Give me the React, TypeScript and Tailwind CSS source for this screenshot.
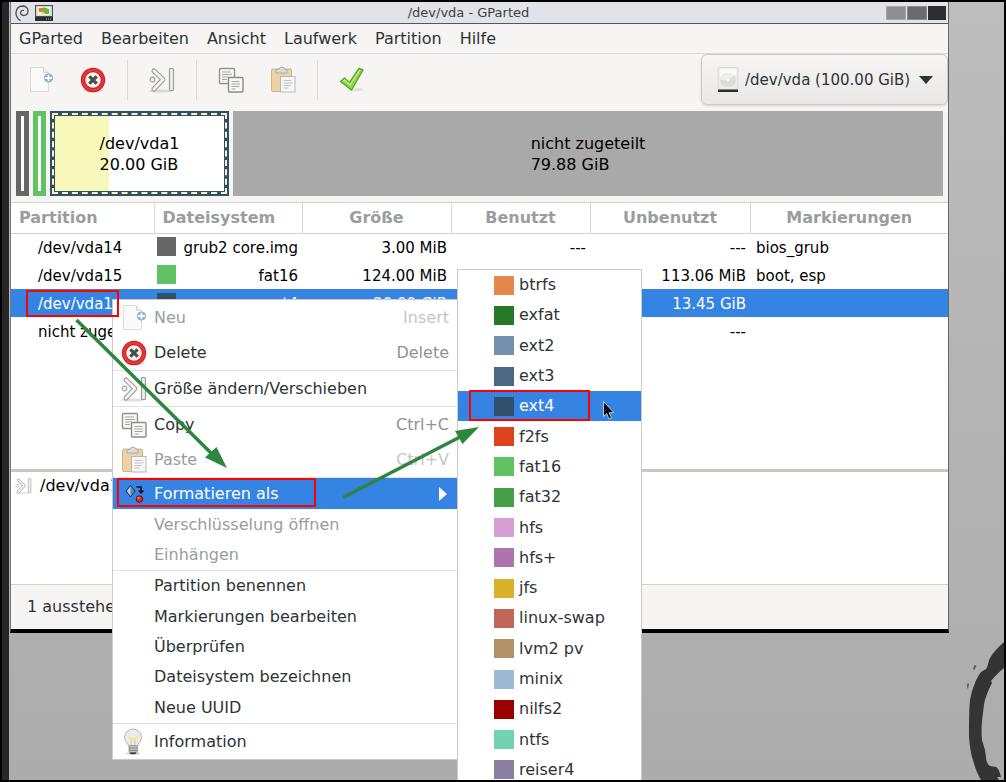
import type { ReactNode } from "react";
import clsx from "clsx";

const devices = ["/dev/vda (100.00 GiB)"];

const menus = ["GParted", "Bearbeiten", "Ansicht", "Laufwerk", "Partition", "Hilfe"];

const columns = [
  { title: "Partition", width: "w-[143px]", align: "text-left" },
  { title: "Dateisystem", width: "w-[148px]", align: "text-left" },
  { title: "Größe", width: "w-[149px]", align: "text-center" },
  { title: "Benutzt", width: "w-[139px]", align: "text-center" },
  { title: "Unbenutzt", width: "w-[160px]", align: "text-center" },
  { title: "Markierungen", width: "", align: "text-center" },
];

const partitions = [
  { name: "/dev/vda14", fs: "grub2 core.img", color: "bg-[#666666]", size: "3.00 MiB", used: "---", unused: "---", flags: "bios_grub" },
  { name: "/dev/vda15", fs: "fat16", color: "bg-[#61c261]", size: "124.00 MiB", used: "10.94 MiB", unused: "113.06 MiB", flags: "boot, esp" },
  { name: "/dev/vda1", fs: "ext4", color: "bg-[#314e6c]", size: "20.00 GiB", used: "", unused: "13.45 GiB", flags: "", selected: true },
  { name: "nicht zugeteilt", fs: "", color: "bg-[#a9a9a9]", size: "", used: "", unused: "---", flags: "" },
];

const filesystems = [
  { name: "btrfs", color: "bg-[#e6884a]" },
  { name: "exfat", color: "bg-[#267726]" },
  { name: "ext2", color: "bg-[#7590ae]" },
  { name: "ext3", color: "bg-[#4b6983]" },
  { name: "ext4", color: "bg-[#314e6c]", selected: true },
  { name: "f2fs", color: "bg-[#df421e]" },
  { name: "fat16", color: "bg-[#61c261]" },
  { name: "fat32", color: "bg-[#46a046]" },
  { name: "hfs", color: "bg-[#d59fd3]" },
  { name: "hfs+", color: "bg-[#b173ae]" },
  { name: "jfs", color: "bg-[#d6b129]" },
  { name: "linux-swap", color: "bg-[#c1665a]" },
  { name: "lvm2 pv", color: "bg-[#b39169]" },
  { name: "minix", color: "bg-[#9db8d2]" },
  { name: "nilfs2", color: "bg-[#990000]" },
  { name: "ntfs", color: "bg-[#70d2b1]" },
  { name: "reiser4", color: "bg-[#887fa3]" },
];

function NewIcon() {
  return (
    <svg viewBox="0 0 26 28" className="h-7 w-[26px]">
      <path d="M2.5 1.5h13l5 5v19h-18z" fill="#fafaf9" stroke="#dcdcda" />
      <path d="M15.5 1.5v5h5" fill="#efefee" stroke="#d6d6d4" />
      <circle cx="20.5" cy="12" r="4.5" fill="#8eaad6" />
      <path d="M20.5 8.7v6.6M17.2 12h6.6" stroke="#fff" strokeWidth="1.8" />
    </svg>
  );
}

function DeleteIcon() {
  return (
    <svg viewBox="0 0 26 28" className="h-7 w-[26px]">
      <ellipse cx="13" cy="24.5" rx="10" ry="2" fill="#000" opacity=".12" />
      <circle cx="13" cy="14" r="10" fill="#f4f4f3" stroke="#cc1a1e" strokeWidth="4.4" />
      <circle cx="13" cy="14" r="10" fill="none" stroke="#e5383b" strokeWidth="2.4" />
      <path d="M9.3 10.3l7.4 7.4M16.7 10.3l-7.4 7.4" stroke="#4b4d4c" strokeWidth="3.2" />
    </svg>
  );
}

function ResizeIcon({ small }: { small?: boolean }) {
  return (
    <svg viewBox="0 0 26 28" className={small ? "h-[18px] w-[17px] opacity-80" : "h-7 w-[26px]"}>
      <ellipse cx="12" cy="25" rx="12" ry="1.6" fill="#000" opacity=".12" />
      <path d="M5 5l9 8.5-9 9.5" fill="none" stroke="#9b9b99" strokeWidth="5" strokeLinecap="round" strokeLinejoin="round" />
      <path d="M5 5l9 8.5-9 9.5" fill="none" stroke="#f3f3f2" strokeWidth="2.8" strokeLinecap="round" strokeLinejoin="round" />
      <circle cx="3.5" cy="13.5" r="2.3" fill="#f3f3f2" stroke="#a5a5a3" strokeWidth="1.2" />
      <rect x="20.5" y="2.5" width="4" height="22" rx="1" fill="#eee" stroke="#9b9b99" strokeWidth="1.2" />
    </svg>
  );
}

function CopyIcon() {
  return (
    <svg viewBox="0 0 26 28" className="h-7 w-[26px]">
      <rect x="1.5" y="2.5" width="15" height="15" rx="1" fill="#f8f8f7" stroke="#92938f" strokeWidth="1.4" />
      <path d="M4 6h9M4 8.5h10M4 11h7M4 13.5h5" stroke="#a4a5a2" />
      <rect x="10.5" y="11.5" width="14.5" height="14.5" rx="1" fill="#f8f8f7" stroke="#8b8c88" strokeWidth="1.4" />
      <path d="M13.5 15.5h8M13.5 18h8.5M13.5 20.5h8M13.5 23h4" stroke="#a4a5a2" />
    </svg>
  );
}

function PasteIcon() {
  return (
    <svg viewBox="0 0 26 28" className="h-7 w-[26px]">
      <rect x="1.5" y="3" width="20" height="22.5" rx="1.5" fill="#ecd2a6" stroke="#cdb48a" />
      <path d="M6 7V4.500q0-1 1-1h2q.5-2.500 3-2.500t3 2.500h1q1 0 1 1V7z" fill="#dcdddb" stroke="#a9aaa7" />
      <rect x="10.5" y="10.5" width="14.5" height="15.5" fill="#f7f7f6" stroke="#b7b8b5" />
      <path d="M13.5 14.5h8M13.5 17h9M13.5 19.5h7M13.5 22h5" stroke="#c1c2c0" />
    </svg>
  );
}

function ApplyIcon() {
  return (
    <svg viewBox="0 0 26 28" className="h-7 w-[26px]">
      <ellipse cx="16" cy="23.5" rx="8" ry="2" fill="#000" opacity=".08" />
      <path d="M1.5 15.5l4-3.500 5 4.500L20 2.500l4 1.500-11.500 20z" fill="#8ddb40" stroke="#5da32a" strokeWidth="1.4" strokeLinejoin="round" />
      <path d="M4 15.2l1.600-1.400 5.300 5L20.600 4.200" fill="none" stroke="#c4f193" strokeWidth="1.2" />
    </svg>
  );
}

function ConvertIcon() {
  return (
    <svg viewBox="0 0 22 20" className="h-5 w-[22px]">
      <path d="M6.5 1.5L11 7l-4.500 6L2 7z" fill="#5b87bd" stroke="#1e3550" />
      <path d="M6.5 2.5v9.500L3 7z" fill="#b4cdea" />
      <path d="M12.5 3h4.500v5" fill="none" stroke="#111" strokeWidth="1.6" />
      <path d="M14 6.5h6.500L17 10z" fill="#111" />
      <circle cx="15.5" cy="15" r="3.3" fill="#d42a2a" stroke="#6f0b10" />
      <circle cx="14.5" cy="14" r="1" fill="#f3a09c" />
    </svg>
  );
}

function BulbIcon() {
  return (
    <svg viewBox="0 0 26 28" className="h-7 w-[26px]">
      <ellipse cx="12" cy="25.5" rx="7" ry="1.5" fill="#000" opacity=".2" />
      <path d="M12 1a8.500 8.500 0 0 0-8.500 8.500c0 4 3.500 5.500 4 8.500h9c.5-3 4-4.500 4-8.500A8.500 8.500 0 0 0 12 1z" fill="#ececea" stroke="#b4b5b2" />
      <path d="M8 7.500c1.500 4 6.500 4 8 0l.5 2.500c-1 2.500-8 2.500-9 0z" fill="#f7ea6a" />
      <path d="M10 12v5.500M14 12v5.500" stroke="#c4c4c0" />
      <rect x="8" y="17.5" width="8.5" height="7" rx="1" fill="#c3c4c1" stroke="#9b9c98" />
      <path d="M8 20h8M8 22.500h8" stroke="#858682" />
      <rect x="9" y="24.5" width="6" height="1.5" rx=".7" fill="#353535" />
    </svg>
  );
}

function DiskIcon() {
  return (
    <svg viewBox="0 0 22 26" className="h-[26px] w-[22px]">
      <rect x="1" y=".5" width="20" height="22" rx="1.5" fill="#ebebe9" stroke="#d8d8d5" />
      <path d="M3 2h16v6L3 15z" fill="#fafafa" />
      <ellipse cx="11" cy="13" rx="8" ry="7" fill="#dddcd8" />
      <path d="M3 13a8 7 0 0 1 14-4.500L11 13z" fill="#eeeeec" />
      <circle cx="11" cy="13" r="1.5" fill="#f8f8f7" />
      <rect x="1" y="22.5" width="20" height="2.5" fill="#2c2e36" />
    </svg>
  );
}

function ToolButton({ label, children }: { label: string; children: ReactNode }) {
  return (
    <button aria-label={label} className="flex h-10 w-[52px] items-center justify-center">
      {children}
    </button>
  );
}

function ToolSeparator() {
  return <div className="mx-2 h-10 w-px bg-[#dddbd8]" />;
}

function TitleBar() {
  return (
    <header className="grid h-[22px] grid-cols-3 items-center border-b border-[#55565a] bg-[#e2e3e9] pl-1 pr-[2px]">
      <div className="flex items-center gap-[6px]">
        <svg viewBox="0 0 14 16" className="h-4 w-[14px]" fill="none" stroke="#4b4d50" strokeLinecap="round">
          <path d="M5 15.500C2 13 .8 10 1 7.500 1.500 3 4.500 1 8 1c3.500.2 5.300 2.800 5 5.500-.3 2.500-2.500 4-4.500 4C6.500 10.300 5.500 9 5.600 7.500 5.800 6 7 5.200 8.300 5.400" strokeWidth="1.3" />
        </svg>
        <svg viewBox="0 0 18 16" className="h-4 w-[18px]">
          <rect x=".5" y=".5" width="17" height="11" fill="#d9dad6" stroke="#4c4d4a" />
          <rect x="3" y="2" width="12" height="8" fill="#f3f3ee" />
          <path d="M4 3h5v4H4z" fill="#e8752c" />
          <path d="M8 2l6 2v5H9z" fill="#5fbb3e" />
          <path d="M7 6l4 3H7z" fill="#e7d13a" />
          <path d="M0 12h18v4H0z" fill="#2f302e" />
          <path d="M11 14h5" stroke="#aaa" strokeDasharray="1 1" />
        </svg>
      </div>
      <h1 className="pr-6 text-center text-[13px] leading-5 text-[#3c3f42]">/dev/vda - GParted</h1>
      <div className="flex justify-end gap-px">
        <button aria-label="Minimieren" className="h-[14px] w-5 border border-[#a7a7aa] bg-[#8f8f8f]" />
        <button aria-label="Maximieren" className="h-[14px] w-5 border border-[#8b8b8d] bg-[#6b6b6b]" />
        <button aria-label="Schließen" className="h-[14px] w-[18px] bg-[#2e2e2e]" />
      </div>
    </header>
  );
}

function Toolbar() {
  return (
    <div className="flex h-[57px] items-start pl-1">
      <div className="mt-[6px] flex items-center">
        <ToolButton label="Neu"><NewIcon /></ToolButton>
        <ToolButton label="Delete"><DeleteIcon /></ToolButton>
        <ToolSeparator />
        <ToolButton label="Größe ändern/Verschieben"><ResizeIcon /></ToolButton>
        <ToolSeparator />
        <ToolButton label="Copy"><CopyIcon /></ToolButton>
        <ToolButton label="Paste"><PasteIcon /></ToolButton>
        <ToolSeparator />
        <ToolButton label="Anwenden"><ApplyIcon /></ToolButton>
      </div>
      <label className="ml-auto flex h-[51px] items-center rounded-md border border-[#cdc9c3] bg-gradient-to-b from-[#f6f5f4] to-[#e9e8e6] pl-[15px] pr-[14px] shadow-sm">
        <DiskIcon />
        <select aria-label="Laufwerk" className="ml-[6px] appearance-none bg-transparent text-[15px]">
          {devices.map((device) => (
            <option key={device}>{device}</option>
          ))}
        </select>
        <svg viewBox="0 0 14 8" className="ml-2 h-2 w-[14px]">
          <path d="M0 0h14L7 8z" fill="#2e3436" />
        </svg>
      </label>
    </div>
  );
}

function DiskGraph() {
  return (
    <div className="flex h-[91px] gap-1 px-[5px] pb-[6px] leading-[21px] text-black">
      <div className="w-[13px] border-[5px] border-[#666666] bg-white" />
      <div className="w-[13px] border-[5px] border-[#61c261] bg-white" />
      <div className="w-[179px] border-2 border-[#314e6c] bg-[#314e6c]">
        <div className="h-full border-2 border-dashed border-[#f7f7b5] p-px">
          <div className="relative flex h-full items-center justify-center bg-white">
            <div className="absolute inset-y-0 left-0 w-[32%] bg-[#f7f7b9]" />
            <div className="relative">
              <p>/dev/vda1</p>
              <p>20.00 GiB</p>
            </div>
          </div>
        </div>
      </div>
      <div className="flex flex-1 items-center justify-center bg-[#a9a9a9]">
        <div>
          <p>nicht zugeteilt</p>
          <p>79.88 GiB</p>
        </div>
      </div>
    </div>
  );
}

function PartitionTable() {
  return (
    <div className="h-[267px] border-t border-[#d5d0cc] bg-white">
      <table className="w-full table-fixed border-collapse">
        <thead>
          <tr className="h-[30px] border-b border-[#d5d0cc] text-[#9a9d9d]">
            {columns.map((column) => (
              <th
                key={column.title}
                className={clsx("border-r border-[#dcd8d5] px-2 py-0 font-bold leading-5 last:border-r-0", column.width, column.align)}
              >
                {column.title}
              </th>
            ))}
          </tr>
        </thead>
        <tbody className="whitespace-nowrap text-right text-[15px] leading-[22px] text-black">
          {partitions.map((p) => (
            <tr key={p.name} className={clsx("h-7", p.selected && "bg-[#3584e4] text-white")}>
              <td className="p-0 pl-[27px] pt-px text-left">{p.name}</td>
              <td className="p-0 pl-[3px] pr-1 pt-px">
                <div className="flex items-center justify-between">
                  <span className={clsx("h-[19px] w-[19px] shrink-0 self-start", p.color)} />
                  {p.fs}
                </div>
              </td>
              <td className="p-0 pr-1 pt-px">{p.size}</td>
              <td className="p-0 pr-1 pt-px">{p.used}</td>
              <td className="p-0 pr-1 pt-px">{p.unused}</td>
              <td className="p-0 pl-[6px] pt-px text-left">{p.flags}</td>
            </tr>
          ))}
        </tbody>
      </table>
    </div>
  );
}

type MenuItemProps = {
  label: string;
  icon?: ReactNode;
  shortcut?: string;
  disabled?: boolean;
  className?: string;
};

function MenuItem({ label, icon, shortcut, disabled, className = "h-[35px]" }: MenuItemProps) {
  return (
    <button disabled={disabled} className={clsx("flex w-full items-center pl-2 pr-2 text-left", disabled && "text-[#9a9d9d]", className)}>
      <span className="mr-[7px] w-[26px]">{icon}</span>
      {label}
      {shortcut && <span className={clsx("ml-auto", disabled ? "text-[#c4c6c6]" : "text-[#8f9393]")}>{shortcut}</span>}
    </button>
  );
}

function Separator() {
  return <hr className="border-[#e3e1df]" />;
}

function ContextMenu() {
  return (
    <div className="absolute left-[112px] top-[299px] w-[346px] border border-[#cfc9c4] bg-white">
      <MenuItem label="Neu" icon={<NewIcon />} shortcut="Insert" disabled />
      <MenuItem label="Delete" icon={<DeleteIcon />} shortcut="Delete" />
      <Separator />
      <MenuItem label="Größe ändern/Verschieben" icon={<ResizeIcon />} />
      <Separator />
      <MenuItem label="Copy" icon={<CopyIcon />} shortcut="Ctrl+C" />
      <MenuItem label="Paste" icon={<PasteIcon />} shortcut="Ctrl+V" disabled />
      <Separator />
      <button className="flex h-[31px] w-full items-center bg-[#3584e4] pl-[11px] pr-[10px] text-white">
        <span className="mr-[7px] w-[23px]"><ConvertIcon /></span>
        Formatieren als
        <svg viewBox="0 0 8 14" className="ml-auto h-[14px] w-2">
          <path d="M0 0l8 7-8 7z" fill="#fff" />
        </svg>
      </button>
      <MenuItem label="Verschlüsselung öffnen" className="h-[31px]" disabled />
      <MenuItem label="Einhängen" className="h-[30px]" disabled />
      <Separator />
      <div className="flex h-[152px] flex-col">
        <MenuItem label="Partition benennen" className="flex-1" />
        <MenuItem label="Markierungen bearbeiten" className="flex-1" />
        <MenuItem label="Überprüfen" className="flex-1" />
        <MenuItem label="Dateisystem bezeichnen" className="flex-1" />
        <MenuItem label="Neue UUID" className="flex-1" />
      </div>
      <Separator />
      <MenuItem label="Information" icon={<BulbIcon />} />
    </div>
  );
}

function FormatMenu() {
  return (
    <div className="absolute left-[457px] top-[269px] flex h-[517px] w-[185px] flex-col border border-[#cfc9c4] bg-white">
      {filesystems.map((fs) => (
        <button
          key={fs.name}
          className={clsx("flex flex-1 items-center gap-[5px] pl-9 text-left", fs.selected && "bg-[#3584e4] text-white")}
        >
          <span className={clsx("h-[19px] w-5", fs.color)} />
          {fs.name}
        </button>
      ))}
    </div>
  );
}

// Red frames, green arrows and the mouse pointer drawn over the windows
function Annotations() {
  return (
    <svg viewBox="0 0 1006 782" className="pointer-events-none absolute left-0 top-0 h-[782px] w-[1006px]">
      <g fill="none" stroke="#ff0000" strokeWidth="2">
        <rect x="27" y="291" width="91" height="25" />
        <rect x="118" y="479" width="197" height="27" />
        <rect x="470" y="391" width="119" height="29" />
      </g>
      <g stroke="#2d8640" strokeWidth="3.5" fill="#2d8640">
        <path d="M76.5 320L212 454" />
        <path d="M343 497.500L460 437" />
        <path d="M227 468l-22-10.500L216.500 447z" stroke="none" />
        <path d="M479 427l-24 4 7.500 13z" stroke="none" />
      </g>
      <path d="M603.5 401.500v15l3.200-3 2.300 5.500 2.500-1-2.300-5.300 4.600-.2z" fill="#0b0b0b" stroke="#d8e4f4" strokeWidth=".8" />
    </svg>
  );
}

function Wallpaper() {
  return (
    <svg viewBox="0 0 50 140" className="absolute bottom-0 right-0 h-[140px] w-[50px]">
      <path
        d="M50 2C44 7 39 13 36 18C34 22 34 27 32 29L27 32C24 36 22 40 21 43C18 50 17 55 16 60C15 72 15 86 15 97C16 108 17 114 19 120C21 128 24 135 27 140L45 140L43 137L47 137C46 132 44 128 42 127L36 126C33 124 32 120 32 117L31 110L28 100C27 90 28 80 29 73C30 66 30 61 32 57C34 51 36 47 38 43L37 41C41 36 45 32 50 28Z"
        fill="#343434"
      />
      <path d="M19 29l1.500-4 2 1-2.500 4zM13 47l.5-4 1.500 1-1 5z" fill="#555" />
    </svg>
  );
}

export default function App() {
  return (
    <div className="relative h-screen min-h-[782px] overflow-hidden bg-black p-[2px] font-['DejaVu_Sans',sans-serif] text-base leading-5 text-[#2e3436]">
      <main className="relative h-full overflow-hidden border-l-[7px] border-[#272727] bg-gradient-to-b from-[#bdbdbd] to-[#acacac]">
        <Wallpaper />
        <section className="relative ml-px mr-[55px] border-x border-b-4 border-b-black border-l-[#77777a] border-r-[#66676a] bg-[#f6f5f4]">
          <TitleBar />
          <nav className="flex h-[30px] items-center gap-[18px] border-b border-[#dddad7] pl-2">
            {menus.map((menu) => (
              <button key={menu}>{menu}</button>
            ))}
          </nav>
          <Toolbar />
          <DiskGraph />
          <PartitionTable />
          <div className="flex h-[116px] items-start border-b border-t-[3px] border-b-[#d5d0cc] border-t-[#cbc7c1] bg-white pl-1 pt-1 text-black">
            <span className="mr-2 mt-px"><ResizeIcon small /></span>
            /dev/vda1
          </div>
          <footer className="flex h-11 items-center pl-4">1 ausstehende</footer>
        </section>
      </main>
      <ContextMenu />
      <FormatMenu />
      <Annotations />
      <div className="pointer-events-none absolute inset-0 border-2 border-black" />
    </div>
  );
}
